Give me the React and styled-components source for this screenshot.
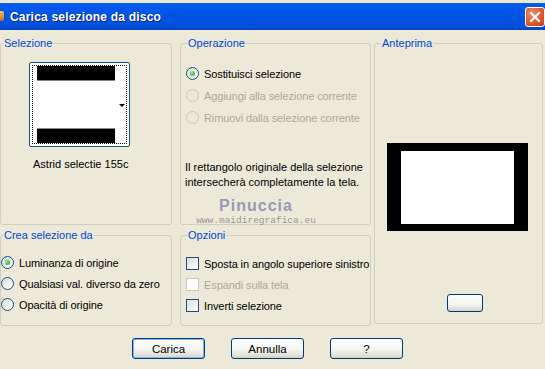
import React from "react";
import styled, { createGlobalStyle } from "styled-components";

const GlobalStyle = createGlobalStyle`
	html, body {
		margin: 0;
		padding: 0;
		background: #ece9d8;
	}
	body {
		font-family: "Liberation Sans", Arial, sans-serif;
		font-size: 11px;
		color: #000;
	}
`;

const Window = styled.div`
	position: relative;
	width: 545px;
	height: 369px;
	background: #ece9d8;
	overflow: hidden;
`;

const TitleBar = styled.div`
	height: 27px;
	margin-top: 3px;
	display: flex;
	align-items: center;
	padding-left: 10px;
	background: linear-gradient(#0a5fe0 0%, #0058ee 12%, #0055e5 40%, #0050dc 80%, #0046c8 100%);
	color: #fff;
	font-weight: bold;
	font-size: 12px;
	letter-spacing: 0.2px;
	text-shadow: 1px 1px 0 #0a1e8a;
`;

const TitleIcon = styled.div`
	position: absolute;
	left: -3px;
	top: 11px;
	width: 7px;
	height: 10px;
	background: linear-gradient(#f7c05a, #c66c1a);
	border-radius: 2px;
`;

const Title = styled.span`
	flex: 1;
`;

const CloseButton = styled.div`
	width: 18px;
	height: 18px;
	border: 1px solid #fff;
	border-radius: 3px;
	background: radial-gradient(circle at 35% 30%, #f08a6a, #e05a30 55%, #c3391a);
	display: flex;
	align-items: center;
	justify-content: center;
`;

const Body = styled.div`
	display: grid;
	grid-template-columns: 172px 8px 191px 3px 169px;
	grid-template-rows: 188px 97px;
	row-gap: 4px;
	padding-top: 7px;
`;

const Group = styled.fieldset`
	margin: 0;
	padding: 0;
	min-width: 0;
	border: 1px solid #d0d0bf;
	border-radius: 3px;
	box-sizing: border-box;
	grid-column: ${({ col }) => col};
	grid-row: ${({ row }) => row};
	position: relative;
	${({ tall }) => tall && "height: 287px; align-self: start;"}
`;

const Legend = styled.legend`
	color: #0046d5;
	font-size: 11px;
	line-height: 13px;
	padding: 0 1px;
	margin-left: ${({ offset }) => offset ?? 6}px;
`;

const Thumb = styled.div`
	margin: 12px 0 0 28px;
	width: 101px;
	height: 85px;
	box-sizing: border-box;
	border: 1px solid #1c5180;
	border-radius: 2px;
	background: #fff;
	padding: 2px;
`;

const ThumbInner = styled.div`
	position: relative;
	height: 100%;
	box-sizing: border-box;
	border: 1px dotted #000;
	padding: 0 11px 0 4px;
	display: flex;
	flex-direction: column;
	justify-content: space-between;
`;

const ThumbBar = styled.div`
	height: 14px;
	background: #000;
	border-${({ side }) => side}: 1px solid #888;
`;

const DropArrow = styled.div`
	position: absolute;
	right: 1px;
	top: 38px;
	width: 0;
	height: 0;
	border-left: 3px solid transparent;
	border-right: 3px solid transparent;
	border-top: 3px solid #000;
`;

const Caption = styled.div`
	margin: 11px 0 0 32px;
`;

const OptionList = styled.div`
	display: flex;
	flex-direction: column;
	gap: ${({ gap }) => gap ?? 8}px;
	margin: ${({ top }) => top ?? 10}px 0 0 ${({ left }) => left ?? 5}px;
`;

const Option = styled.label`
	display: flex;
	align-items: center;
	gap: 5px;
	height: 13px;
	white-space: nowrap;
	letter-spacing: -0.1px;
	color: ${({ disabled }) => (disabled ? "#aca899" : "#000")};
`;

const RadioMark = styled.span`
	width: 11px;
	height: 11px;
	border-radius: 50%;
	border: 1px solid ${({ disabled }) => (disabled ? "#cac8bb" : "#1c5180")};
	background: ${({ disabled }) =>
		disabled ? "#ece9d8" : "linear-gradient(135deg, #dcdcd7, #fff)"};
	display: flex;
	align-items: center;
	justify-content: center;
	flex: none;
	&::after {
		content: "";
		width: 5px;
		height: 5px;
		border-radius: 50%;
		background: ${({ checked }) =>
			checked ? "radial-gradient(circle at 35% 35%, #7ef07e, #21a121)" : "transparent"};
	}
`;

const CheckMark = styled.span`
	width: 11px;
	height: 11px;
	border: 1px solid ${({ disabled }) => (disabled ? "#cac8bb" : "#1c5180")};
	background: ${({ disabled }) =>
		disabled ? "#fff" : "linear-gradient(135deg, #dcdcd7, #fff)"};
	flex: none;
`;

const Note = styled.div`
	margin: 36px 0 0 4px;
	line-height: 15px;
	white-space: nowrap;
`;

const Preview = styled.div`
	margin: 93px 0 0 12px;
	width: 141px;
	height: 88px;
	box-sizing: border-box;
	background: #000;
	padding: 8px 14px 7px 14px;
`;

const PreviewCanvas = styled.div`
	height: 100%;
	background: #fff;
`;

const SmallButton = styled.div`
	margin: 63px 0 0 72px;
	width: 36px;
	height: 18px;
	box-sizing: border-box;
	border: 1px solid #003c74;
	border-radius: 3px;
	background: linear-gradient(#fff, #f4f4f0 60%, #d6d0c5);
`;

const ButtonRow = styled.div`
	display: flex;
	gap: 26px;
	margin-top: 12px;
	padding-left: 132px;
`;

const Button = styled.div`
	width: 73px;
	height: 21px;
	box-sizing: border-box;
	border: 1px solid #003c74;
	border-radius: 3px;
	background: linear-gradient(#fff, #f4f4f0 55%, #e3e1d8 85%, #d6d0c5);
	box-shadow: ${({ primary }) => (primary ? "inset 0 0 0 1px #8ab4f0" : "none")};
	display: flex;
	align-items: center;
	justify-content: center;
	font-size: 11.5px;
`;

const Watermark = styled.div`
	position: absolute;
	left: 195px;
	top: 197px;
	width: 122px;
	text-align: center;
	color: rgba(110, 118, 160, 0.7);
	pointer-events: none;
`;

const WatermarkName = styled.div`
	font-family: "Liberation Sans", sans-serif;
	font-size: 16px;
	font-weight: bold;
	letter-spacing: 1px;
	line-height: 18px;
`;

const WatermarkUrl = styled.div`
	font-family: "Liberation Mono", monospace;
	font-size: 9.5px;
	line-height: 11px;
	color: rgba(110, 110, 130, 0.7);
`;

const Radio = ({ checked, disabled, children }) => (
	<Option disabled={disabled}>
		<RadioMark checked={checked} disabled={disabled} />
		{children}
	</Option>
);

const Check = ({ disabled, children }) => (
	<Option disabled={disabled}>
		<CheckMark disabled={disabled} />
		{children}
	</Option>
);

export default function App() {
	return (
		<Window>
			<GlobalStyle />
			<TitleBar>
				<TitleIcon />
				<Title>Carica selezione da disco</Title>
				<CloseButton>
					<svg width="12" height="12" viewBox="0 0 12 12">
						<path d="M2 2 L10 10 M10 2 L2 10" stroke="#fff" strokeWidth="2.2" strokeLinecap="square" />
					</svg>
				</CloseButton>
			</TitleBar>

			<Body>
				<Group col={1} row={1}>
					<Legend offset={2}>Selezione</Legend>
					<Thumb>
						<ThumbInner>
							<ThumbBar side="bottom" />
							<ThumbBar side="top" />
							<DropArrow />
						</ThumbInner>
					</Thumb>
					<Caption>Astrid selectie 155c</Caption>
				</Group>

				<Group col={3} row={1}>
					<Legend>Operazione</Legend>
					<OptionList top={17} gap={9}>
						<Radio checked>Sostituisci selezione</Radio>
						<Radio disabled>Aggiungi alla selezione corrente</Radio>
						<Radio disabled>Rimuovi dalla selezione corrente</Radio>
					</OptionList>
					<Note>
						Il rettangolo originale della selezione
						<br />
						intersecherà completamente la tela.
					</Note>
				</Group>

				<Group col={5} row="1 / span 2" tall>
					<Legend>Anteprima</Legend>
					<Preview>
						<PreviewCanvas />
					</Preview>
					<SmallButton />
				</Group>

				<Group col={1} row={2}>
					<Legend offset={2}>Crea selezione da</Legend>
					<OptionList top={14} gap={8} left={0}>
						<Radio checked>Luminanza di origine</Radio>
						<Radio>Qualsiasi val. diverso da zero</Radio>
						<Radio>Opacità di origine</Radio>
					</OptionList>
				</Group>

				<Group col={3} row={2}>
					<Legend>Opzioni</Legend>
					<OptionList top={15} gap={8}>
						<Check>Sposta in angolo superiore sinistro</Check>
						<Check disabled>Espandi sulla tela</Check>
						<Check>Inverti selezione</Check>
					</OptionList>
				</Group>
			</Body>

			<ButtonRow>
				<Button primary>Carica</Button>
				<Button>Annulla</Button>
				<Button>?</Button>
			</ButtonRow>

			<Watermark>
				<WatermarkName>Pinuccia</WatermarkName>
				<WatermarkUrl>www.maidiregrafica.eu</WatermarkUrl>
			</Watermark>
		</Window>
	);
}
